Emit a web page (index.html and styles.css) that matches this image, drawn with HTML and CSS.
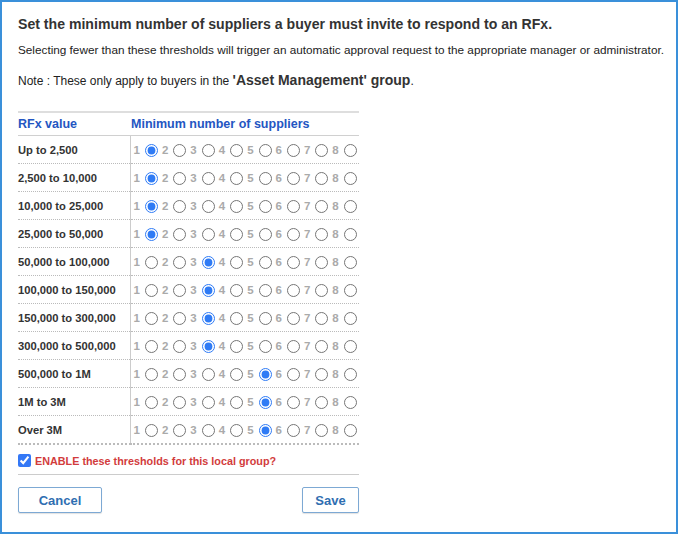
FILE: index.html
```html
<!DOCTYPE html>
<html>
<head>
<meta charset="utf-8">
<link rel="stylesheet" href="styles.css">
</head>
<body>
<div class="dialog">
  <h1 class="title">Set the minimum number of suppliers a buyer must invite to respond to an RFx.</h1>
  <p class="desc">Selecting fewer than these thresholds will trigger an automatic approval request to the appropriate manager or administrator.</p>
  <p class="note">Note : These only apply to buyers in the <b class="group">'Asset Management' group</b>.</p>
  <table class="grid">
    <colgroup><col class="col1"><col class="col2"></colgroup>
    <thead>
      <tr><th class="c1">RFx value</th><th class="c2">Minimum number of suppliers</th></tr>
    </thead>
    <tbody id="rows"></tbody>
  </table>
  <label class="enable"><input type="checkbox" checked class="chk"><span>ENABLE these thresholds for this local group?</span></label>
  <div class="actions">
    <button class="btn cancel">Cancel</button>
    <button class="btn save">Save</button>
  </div>
</div>
<script src="app.js"></script>
</body>
</html>
```
FILE: app.js
```js
const data = [
  ["Up to 2,500", 1], ["2,500 to 10,000", 1], ["10,000 to 25,000", 1], ["25,000 to 50,000", 1],
  ["50,000 to 100,000", 3], ["100,000 to 150,000", 3], ["150,000 to 300,000", 3], ["300,000 to 500,000", 3],
  ["500,000 to 1M", 5], ["1M to 3M", 5], ["Over 3M", 5]
];
const tb = document.getElementById("rows");
data.forEach((d, i) => {
  const tr = document.createElement("tr");
  const th = document.createElement("td");
  th.className = "c1";
  th.textContent = d[0];
  const td = document.createElement("td");
  td.className = "c2";
  let html = "";
  for (let n = 1; n <= 8; n++) {
    html += '<label class="opt"><span class="num">' + n + '</span><input type="radio" class="rad" name="r' + i + '"' + (n === d[1] ? " checked" : "") + '></label>';
  }
  td.innerHTML = html;
  tr.appendChild(th);
  tr.appendChild(td);
  tb.appendChild(tr);
});
```
FILE: styles.css
```css
html, body {
  margin: 0;
  padding: 0;
  background: #fff;
}
body {
  font-family: "Liberation Sans", Arial, sans-serif;
  color: #222;
}
.dialog {
  box-sizing: border-box;
  width: 678px;
  height: 534px;
  border: 2px solid #3a90da;
  padding: 12px 16px 0 16px;
}
.title {
  margin: 0;
  font-size: 14.1px;
  font-weight: bold;
  color: #333;
  line-height: 20px;
}
.desc {
  margin: 7px 0 0 0;
  font-size: 11.75px;
  line-height: 18px;
  color: #222;
  white-space: nowrap;
}
.note {
  margin: 11px 0 0 0;
  font-size: 12px;
  line-height: 20px;
  color: #222;
}
.group {
  font-size: 14px;
  color: #333;
}
.grid {
  margin-top: 20px;
  border-collapse: collapse;
  table-layout: fixed;
  width: 341px;
  border-top: 2px solid #dedede;
  border-bottom: 2px dotted #bbb;
}
.col1 { width: 112px; }
.col2 { width: 229px; }
.grid th {
  text-align: left;
  font-size: 12.5px;
  font-weight: bold;
  color: #2456c2;
  height: 22px;
  padding: 0;
  border-bottom: 1px solid #d0d0d0;
  white-space: nowrap;
}
.grid td {
  height: 27px;
  padding: 0;
  border-bottom: 1px dotted #bbb;
}
.grid tbody tr:last-child td {
  border-bottom: none;
}
.grid td.c1 {
  font-size: 11.2px;
  font-weight: bold;
  color: #333;
  white-space: nowrap;
}
.grid td.c2 {
  border-left: 1px solid #ccc;
  padding-left: 3px;
  white-space: nowrap;
}
.grid th.c2 {
  padding-left: 1px;
}
.opt {
  display: inline-flex;
  align-items: center;
  vertical-align: middle;
  margin-right: 4px;
}
.num {
  font-size: 11.5px;
  font-weight: bold;
  color: #aaa;
}
.rad {
  width: 13px;
  height: 13px;
  margin: 0 0 0 5px;
  accent-color: #2f7bf5;
}
.enable {
  display: flex;
  align-items: center;
  margin-top: 9px;
  font-size: 10.8px;
  font-weight: bold;
  color: #d23c3c;
}
.chk {
  width: 13px;
  height: 13px;
  margin: 0 4px 0 0;
  accent-color: #3478f6;
}
.actions {
  width: 341px;
  margin-top: 7px;
  border-top: 1px solid #ccc;
  padding-top: 12px;
  display: flex;
  justify-content: space-between;
}
.btn {
  font-family: "Liberation Sans", Arial, sans-serif;
  font-size: 13px;
  font-weight: bold;
  color: #2f6eb1;
  background: #fff;
  border: 1px solid #7da9d4;
  border-radius: 2px;
  height: 26px;
  padding: 0;
  box-shadow: 0 1px 1px rgba(0,0,0,0.12);
}
.cancel { width: 84px; }
.save { width: 57px; }
```
